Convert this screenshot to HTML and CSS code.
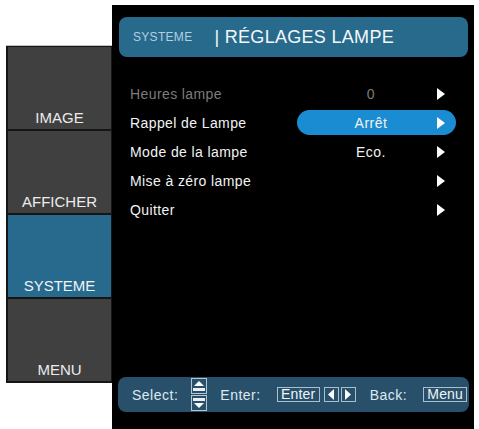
FILE: index.html
```html
<!DOCTYPE html>
<html lang="fr">
<head>
<meta charset="utf-8">
<title>Réglages lampe</title>
<link rel="stylesheet" href="styles.css">
</head>
<body>
<div class="screen">
  <nav class="sidebar">
    <div class="tab"><span>IMAGE</span></div>
    <div class="tab"><span>AFFICHER</span></div>
    <div class="tab active"><span>SYSTEME</span></div>
    <div class="tab"><span>MENU</span></div>
  </nav>
  <main class="panel">
    <header class="title">
      <span class="crumb">SYSTEME</span>
      <span class="heading">| RÉGLAGES LAMPE</span>
    </header>
    <ul class="menu">
      <li class="row disabled">
        <span class="label">Heures lampe</span>
        <span class="cell"><span class="value">0</span><span class="arrow"></span></span>
      </li>
      <li class="row selected">
        <span class="label">Rappel de Lampe</span>
        <span class="cell"><span class="value">Arrêt</span><span class="arrow"></span></span>
      </li>
      <li class="row">
        <span class="label">Mode de la lampe</span>
        <span class="cell"><span class="value">Eco.</span><span class="arrow"></span></span>
      </li>
      <li class="row">
        <span class="label">Mise à zéro lampe</span>
        <span class="cell"><span class="value"></span><span class="arrow"></span></span>
      </li>
      <li class="row">
        <span class="label">Quitter</span>
        <span class="cell"><span class="value"></span><span class="arrow"></span></span>
      </li>
    </ul>
    <footer class="hints">
      <span class="hint select-label">Select:</span>
      <svg class="updown" width="16" height="34" viewBox="0 0 16 34">
        <rect x="0.5" y="0.5" width="15" height="15" fill="none" stroke="#b4c6d2"/>
        <polygon points="3,8 8,3 13,8" fill="#ffffff"/>
        <rect x="2" y="10" width="12" height="3" fill="#e8eef2"/>
        <rect x="0.5" y="17.5" width="15" height="15" fill="none" stroke="#b4c6d2"/>
        <rect x="2" y="20" width="12" height="3" fill="#e8eef2"/>
        <polygon points="3,25 8,30 13,25" fill="#ffffff"/>
      </svg>
      <span class="hint enter-label">Enter:</span>
      <span class="key key-enter">Enter</span>
      <span class="key key-arrow">
        <svg width="8" height="11" viewBox="0 0 8 11"><polygon points="7,0 1,5.5 7,11" fill="#ffffff"/></svg>
      </span>
      <span class="key key-arrow key-right">
        <svg width="8" height="11" viewBox="0 0 8 11"><polygon points="1,0 7,5.5 1,11" fill="#ffffff"/></svg>
      </span>
      <span class="hint back-label">Back:</span>
      <span class="key key-menu">Menu</span>
    </footer>
  </main>
</div>
</body>
</html>
```
FILE: styles.css
```css
html, body {
  margin: 0;
  padding: 0;
  background: #ffffff;
}

body {
  font-family: "Liberation Sans", Arial, sans-serif;
  width: 479px;
  height: 429px;
  overflow: hidden;
}

.screen {
  display: flex;
  align-items: flex-start;
  padding-left: 6px;
}

/* Left tabs */
.sidebar {
  margin-top: 45px;
  width: 103px;
  border-top: 1px solid #c4c4c4;
  background: #151515;
  padding: 1px 1px 2px 2px;
  display: flex;
  flex-direction: column;
  gap: 2px;
}

.tab {
  height: 82px;
  background: #404040;
  display: flex;
  align-items: flex-end;
  justify-content: center;
  padding-bottom: 3px;
  box-sizing: border-box;
  color: #ececec;
  font-size: 15px;
  line-height: 16px;
}

.tab.active {
  background: #276a8e;
  color: #eef4f8;
}

/* Main panel */
.panel {
  margin-top: 5px;
  width: 362px;
  height: 424px;
  background: #000000;
  display: flex;
  flex-direction: column;
}

.title {
  margin: 12px 6px 0 7px;
  height: 40px;
  border-radius: 8px;
  background: #286a8c;
  display: flex;
  align-items: baseline;
  padding: 0 0 0 14px;
  box-sizing: border-box;
  line-height: 40px;
}

.crumb {
  font-size: 12px;
  letter-spacing: 0.3px;
  color: #b2cfe0;
  margin-right: 22px;
  position: relative;
  top: -2px;
}

.heading {
  font-size: 18px;
  letter-spacing: 0.3px;
  color: #f4f8fa;
}

/* Menu rows */
.menu {
  list-style: none;
  margin: 22px 18px 0 18px;
  padding: 0;
  flex: 1;
}

.row {
  height: 29px;
  display: flex;
  align-items: center;
  font-size: 14px;
  letter-spacing: 0.4px;
  color: #f2f2f2;
}

.row.disabled {
  color: #7c7c7c;
}

.label {
  flex: 1;
}

.cell {
  width: 159px;
  height: 25px;
  border-radius: 13px;
  display: flex;
  align-items: center;
  box-sizing: border-box;
  padding-left: 12px;
}

.row.selected .cell {
  background: #1a8dd2;
}

.value {
  width: 124px;
  text-align: center;
  letter-spacing: 0.5px;
}

.arrow {
  margin-left: 4px;
  width: 0;
  height: 0;
  border-top: 6px solid transparent;
  border-bottom: 6px solid transparent;
  border-left: 8px solid #ffffff;
}

/* Footer hints */
.hints {
  margin: 0 5px 17px 6px;
  height: 35px;
  border-radius: 8px;
  background: #29506a;
  display: flex;
  align-items: center;
  padding-left: 14px;
  box-sizing: border-box;
  font-size: 14px;
  letter-spacing: 0.5px;
  color: #dde9f0;
}

.select-label { margin-right: 13px; }
.updown { display: block; margin-right: 13px; }
.enter-label { margin-right: 16px; }
.back-label { margin-left: 14px; margin-right: 16px; }

.key {
  height: 15px;
  border: 1px solid #a9c0ce;
  box-sizing: border-box;
  display: flex;
  align-items: center;
  justify-content: center;
  line-height: 13px;
  color: #f0f4f6;
  letter-spacing: 0.2px;
}

.key-enter { width: 43px; margin-right: 4px; }
.key-arrow { width: 15px; }
.key-right { margin-left: 2px; }
.key-arrow svg { display: block; }
.key-menu { width: 44px; }
```
